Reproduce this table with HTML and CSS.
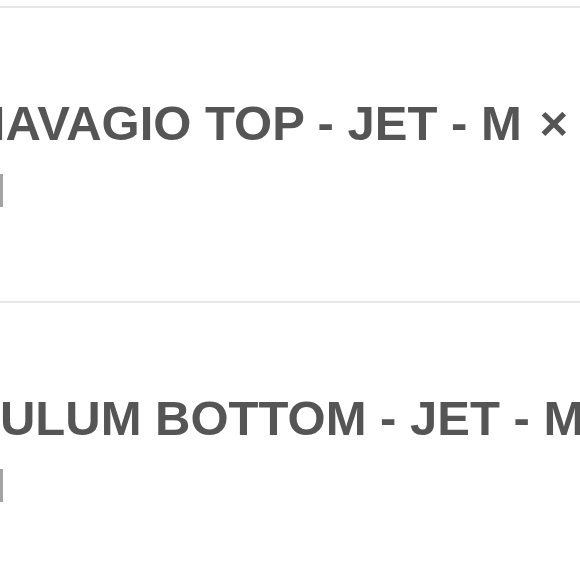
FILE: index.html
```html
<!DOCTYPE html>
<html lang="en">
<head>
    <meta charset="UTF-8">
    <meta name="viewport" content="width=device-width, initial-scale=1.0">
    <title>Cart</title>
    <link rel="stylesheet" href="styles.css">
</head>
<body>

    <div class="cart-list">
        <div class="cart-item">
            <h3 class="item-title">NAVAGIO TOP - JET - M <span class="remove">&times;</span></h3>
            <div class="item-qty"><span class="qty-edge"></span></div>
        </div>
        <div class="cart-item">
            <h3 class="item-title">TULUM BOTTOM - JET - M <span class="remove">&times;</span></h3>
            <div class="item-qty"><span class="qty-edge"></span></div>
        </div>
    </div>

</body>
</html>
```

FILE: styles.css
```css
:root {
    --color-texto: #555555;
    --color-linea: #e6e6e6;
    --color-barra: #a3a3a3;
}

body {
    margin: 0;
    padding-top: 6px;
    background: #ffffff;
    font-family: 'Liberation Sans', Arial, sans-serif;
    overflow: hidden;
}

.cart-list {
    margin-left: -30px;
}

.cart-item {
    border-top: 2px solid var(--color-linea);
    padding: 91px 0 94px 0;
}

.item-title {
    margin: 0;
    font-size: 49px;
    line-height: 1;
    font-weight: 700;
    color: var(--color-texto);
    white-space: nowrap;
}

.remove {
    margin-left: 4px;
    font-weight: 700;
}

.item-qty {
    display: flex;
    margin-top: 26px;
    height: 33px;
}

.qty-edge {
    margin-left: 30px;
    width: 3px;
    height: 33px;
    background: var(--color-barra);
}
```
